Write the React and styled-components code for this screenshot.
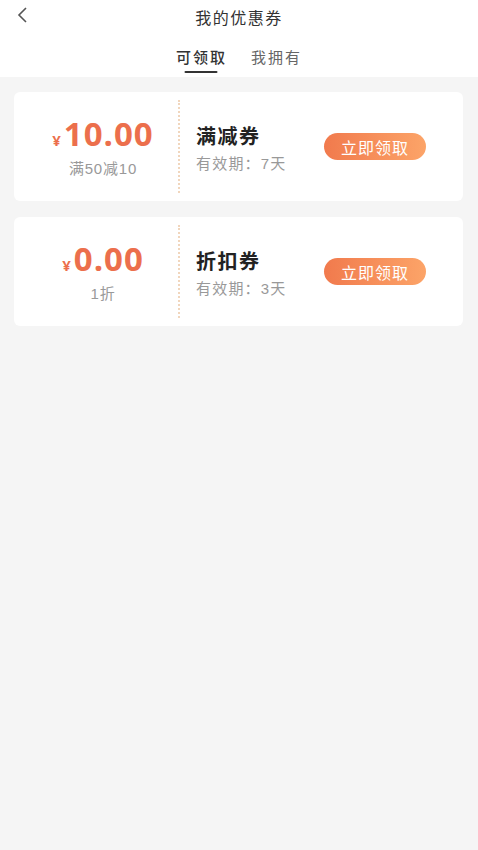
import React, { useState } from "react";
import styled, { createGlobalStyle } from "styled-components";

const GlobalStyle = createGlobalStyle`
  html, body {
    margin: 0;
    padding: 0;
    background: #f5f5f5;
    font-family: "Liberation Sans", "Noto Sans CJK SC", sans-serif;
  }
  #root {
    min-height: 850px;
  }
`;

const Page = styled.div`
  min-height: 850px;
  background: #f5f5f5;
  display: flex;
  flex-direction: column;
`;

const Header = styled.div`
  background: #fff;
  display: flex;
  flex-direction: column;
`;

const NavBar = styled.div`
  position: relative;
  height: 34px;
  display: flex;
  align-items: center;
  justify-content: center;
`;

const BackButton = styled.button`
  position: absolute;
  left: 12px;
  top: 5px;
  width: 20px;
  height: 20px;
  padding: 0;
  border: none;
  background: none;
  display: flex;
  align-items: center;
  justify-content: center;
`;

const Title = styled.h1`
  margin: 0;
  font-size: 16px;
  font-weight: 400;
  color: #333;
  letter-spacing: 1.5px;
`;

const Tabs = styled.div`
  height: 43px;
  display: flex;
  justify-content: center;
  gap: 24px;
`;

const Tab = styled.div`
  position: relative;
  padding-top: 12px;
  font-size: 15px;
  color: ${(p) => (p.$active ? "#333" : "#666")};
  font-weight: ${(p) => (p.$active ? 500 : 400)};
  letter-spacing: 2px;
  cursor: pointer;

  &::after {
    content: "";
    display: ${(p) => (p.$active ? "block" : "none")};
    position: absolute;
    left: 50%;
    transform: translateX(-50%);
    top: 37px;
    width: 33px;
    height: 2px;
    border-radius: 1px;
    background: #333;
  }
`;

const List = styled.div`
  display: flex;
  flex-direction: column;
  gap: 16px;
  padding: 15px 15px 0 14px;
`;

const Card = styled.div`
  height: 109px;
  background: #fff;
  border-radius: 6px;
  display: flex;
  align-items: center;
`;

const AmountCol = styled.div`
  width: 150px;
  padding-left: 14px;
  display: flex;
  flex-direction: column;
  align-items: center;
  padding-top: 1px;
`;

const Amount = styled.div`
  display: flex;
  align-items: baseline;
  color: #ec6f4c;
  font-family: "Open Sans", "Liberation Sans", sans-serif;
  font-weight: 700;
  line-height: 1;
`;

const Yen = styled.span`
  font-size: 15px;
  margin-right: 3px;
`;

const Value = styled.span`
  font-size: 33px;
  letter-spacing: 1px;
`;

const Condition = styled.div`
  margin-top: 7px;
  font-size: 15px;
  color: #999;
  letter-spacing: 0.8px;
`;

const Divider = styled.div`
  align-self: stretch;
  margin: 8px 0;
  border-left: 2px dotted #f1d6bd;
`;

const InfoCol = styled.div`
  flex: 1;
  display: flex;
  flex-direction: column;
  padding-left: 16px;
`;

const CouponName = styled.div`
  font-size: 20px;
  font-weight: 700;
  color: #222;
  letter-spacing: 1.5px;
`;

const Expiry = styled.div`
  margin-top: 2px;
  font-size: 15px;
  color: #999;
  letter-spacing: 1.2px;
`;

const ClaimButton = styled.button`
  margin-right: 37px;
  width: 102px;
  height: 27px;
  border: none;
  border-radius: 14px;
  background: linear-gradient(90deg, #f17a4d 0%, #fca468 100%);
  color: #fff;
  font-size: 16px;
  font-family: "Liberation Sans", "Noto Sans CJK SC", sans-serif;
  letter-spacing: 1px;
  padding: 0;
  cursor: pointer;
`;

const coupons = [
  { value: "10.00", condition: "满50减10", name: "满减券", days: 7 },
  { value: "0.00", condition: "1折", name: "折扣券", days: 3 },
];

export default function App() {
  const [tab, setTab] = useState(0);
  return (
    <Page>
      <GlobalStyle />
      <Header>
        <NavBar>
          <BackButton aria-label="返回">
            <svg width="14" height="16" viewBox="0 0 14 16">
              <path d="M11 1 L4 8 L11 15" fill="none" stroke="#555" strokeWidth="1.6" />
            </svg>
          </BackButton>
          <Title>我的优惠券</Title>
        </NavBar>
        <Tabs>
          {["可领取", "我拥有"].map((t, i) => (
            <Tab key={t} $active={tab === i} onClick={() => setTab(i)}>
              {t}
            </Tab>
          ))}
        </Tabs>
      </Header>
      <List>
        {coupons.map((c) => (
          <Card key={c.name}>
            <AmountCol>
              <Amount>
                <Yen>¥</Yen>
                <Value>{c.value}</Value>
              </Amount>
              <Condition>{c.condition}</Condition>
            </AmountCol>
            <Divider />
            <InfoCol>
              <CouponName>{c.name}</CouponName>
              <Expiry>有效期：{c.days}天</Expiry>
            </InfoCol>
            <ClaimButton>立即领取</ClaimButton>
          </Card>
        ))}
      </List>
    </Page>
  );
}
